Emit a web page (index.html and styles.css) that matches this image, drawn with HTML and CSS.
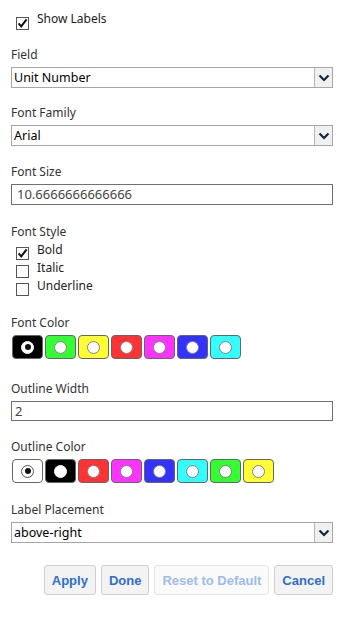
FILE: index.html
```html
<!DOCTYPE html>
<html lang="en">
<head>
  <meta charset="UTF-8" />
  <title>Label Options</title>
  <meta name="viewport" content="width=device-width, initial-scale=1.0">
  <link rel="stylesheet" href="styles.css">
</head>
<body>

<div class="panel">

  <div class="check-row top-row">
    <svg class="box" width="13" height="13" viewBox="0 0 13 13"><rect x="0.5" y="0.5" width="12" height="12" fill="#fff" stroke="#555"/><path d="M2.6 6.4 L5.2 9.4 L10.6 2.4" fill="none" stroke="#111" stroke-width="2"/></svg>
    <span>Show Labels</span>
  </div>

  <div class="group field-group">
    <div class="label">Field</div>
    <div class="select">
      <span class="value">Unit Number</span>
      <span class="arrow"><svg width="12" height="8" viewBox="0 0 12 8"><path d="M1.5 1.5 L6 6 L10.5 1.5" fill="none" stroke="#14233f" stroke-width="2.2"/></svg></span>
    </div>
  </div>

  <div class="group">
    <div class="label">Font Family</div>
    <div class="select">
      <span class="value">Arial</span>
      <span class="arrow"><svg width="12" height="8" viewBox="0 0 12 8"><path d="M1.5 1.5 L6 6 L10.5 1.5" fill="none" stroke="#14233f" stroke-width="2.2"/></svg></span>
    </div>
  </div>

  <div class="group size-group">
    <div class="label">Font Size</div>
    <div class="input">10.6666666666666</div>
  </div>

  <div class="group style-group">
    <div class="label">Font Style</div>
    <div class="style-list">
      <div class="check-row">
        <svg class="box" width="13" height="13" viewBox="0 0 13 13"><rect x="0.5" y="0.5" width="12" height="12" fill="#fff" stroke="#555"/><path d="M2.6 6.4 L5.2 9.4 L10.6 2.4" fill="none" stroke="#111" stroke-width="2"/></svg>
        <span>Bold</span>
      </div>
      <div class="check-row">
        <svg class="box" width="13" height="13" viewBox="0 0 13 13"><rect x="0.5" y="0.5" width="12" height="12" fill="#fff" stroke="#555"/></svg>
        <span>Italic</span>
      </div>
      <div class="check-row">
        <svg class="box" width="13" height="13" viewBox="0 0 13 13"><rect x="0.5" y="0.5" width="12" height="12" fill="#fff" stroke="#555"/></svg>
        <span>Underline</span>
      </div>
    </div>
  </div>

  <div class="group font-color-group">
    <div class="label">Font Color</div>
    <div class="swatches">
      <span class="swatch black selected"><i></i></span>
      <span class="swatch green"><i></i></span>
      <span class="swatch yellow"><i></i></span>
      <span class="swatch red"><i></i></span>
      <span class="swatch magenta"><i></i></span>
      <span class="swatch blue"><i></i></span>
      <span class="swatch cyan"><i></i></span>
    </div>
  </div>

  <div class="group">
    <div class="label">Outline Width</div>
    <div class="input short">2</div>
  </div>

  <div class="group size-group">
    <div class="label">Outline Color</div>
    <div class="swatches">
      <span class="swatch white selected"><i></i></span>
      <span class="swatch black"><i></i></span>
      <span class="swatch red"><i></i></span>
      <span class="swatch magenta"><i></i></span>
      <span class="swatch blue"><i></i></span>
      <span class="swatch cyan"><i></i></span>
      <span class="swatch green"><i></i></span>
      <span class="swatch yellow"><i></i></span>
    </div>
  </div>

  <div class="group">
    <div class="label">Label Placement</div>
    <div class="select">
      <span class="value">above-right</span>
      <span class="arrow"><svg width="12" height="8" viewBox="0 0 12 8"><path d="M1.5 1.5 L6 6 L10.5 1.5" fill="none" stroke="#14233f" stroke-width="2.2"/></svg></span>
    </div>
  </div>

  <div class="buttons">
    <button class="btn">Apply</button>
    <button class="btn">Done</button>
    <button class="btn" disabled>Reset to Default</button>
    <button class="btn">Cancel</button>
  </div>

</div>

</body>
</html>
```

FILE: styles.css
```css
html, body {
  margin: 0;
  padding: 0;
  background: #fff;
  font-family: 'Noto Sans', 'Open Sans', sans-serif;
  font-size: 12px;
  color: #333;
}

.panel {
  width: 322px;
  padding: 10px 0 0 11px;
}

.check-row {
  display: flex;
  align-items: flex-start;
  height: 18px;
  line-height: 18px;
  padding-left: 5px;
  color: #222;
}

.check-row .box {
  margin-top: 6px;
  margin-right: 8px;
  flex-shrink: 0;
}

.top-row {
  margin-bottom: 19px;
}

.top-row .box {
  margin-top: 7px;
}

/* spacing between groups follows the original dialog */
.group              { margin-bottom: 18px; }
.field-group        { margin-bottom: 17px; }
.size-group         { margin-bottom: 19px; }
.style-group        { margin-bottom: 20px; }
.font-color-group   { margin-bottom: 22px; }

.label {
  height: 16px;
  line-height: 16px;
  margin-bottom: 4px;
  color: #333;
}

.select {
  display: flex;
  height: 21px;
  box-sizing: border-box;
  border: 1px solid #a6a6a6;
  background: #fff;
}

.select .value {
  flex: 1;
  line-height: 19px;
  padding-left: 2px;
  color: #000;
  font-size: 12.5px;
}

.select .arrow {
  width: 17px;
  display: flex;
  align-items: center;
  justify-content: center;
  background: #f0f0f0;
  border-left: 1px solid #b4b4b4;
}

.input {
  height: 21px;
  box-sizing: border-box;
  border: 1px solid #707070;
  line-height: 19px;
  padding-left: 5px;
  font-size: 13px;
  color: #444;
}

.input.short {
  height: 20px;
  line-height: 18px;
  padding-left: 3px;
}

.style-list {
  margin-top: -3px;
}

.swatches {
  display: flex;
  gap: 2px;
  padding-left: 1px;
}

.swatch {
  width: 31px;
  height: 24px;
  box-sizing: border-box;
  border: 1px solid #666;
  border-radius: 4px;
  display: flex;
  align-items: center;
  justify-content: center;
}

.swatch i {
  width: 13px;
  height: 13px;
  box-sizing: border-box;
  border-radius: 50%;
  background: #fff;
  border: 1px solid #808080;
  display: flex;
  align-items: center;
  justify-content: center;
}

.swatch.selected i::after {
  content: '';
  width: 6px;
  height: 6px;
  border-radius: 50%;
  background: #111;
}

.swatch.black   { background: #000; }
.swatch.white   { background: #fff; }
.swatch.green   { background: #33ff33; }
.swatch.yellow  { background: #ffff33; }
.swatch.red     { background: #ff3333; }
.swatch.magenta { background: #ff33ff; }
.swatch.blue    { background: #3333ff; }
.swatch.cyan    { background: #33ffff; }

.swatch.black i { border-color: #fff; }
.swatch.white i { border-color: #555; }

.buttons {
  display: flex;
  justify-content: flex-end;
  gap: 5px;
  margin-top: 22px;
}

.btn {
  height: 30px;
  padding: 0 7px;
  font-family: 'Liberation Sans', Arial, sans-serif;
  font-weight: bold;
  font-size: 13px;
  color: #2f6fca;
  background: #f3f3f3;
  border: 1px solid #cfcfcf;
  border-radius: 3px;
}

.btn:disabled {
  color: #9cbde9;
  background: #fafafa;
  border-color: #e6e6e6;
}
```
